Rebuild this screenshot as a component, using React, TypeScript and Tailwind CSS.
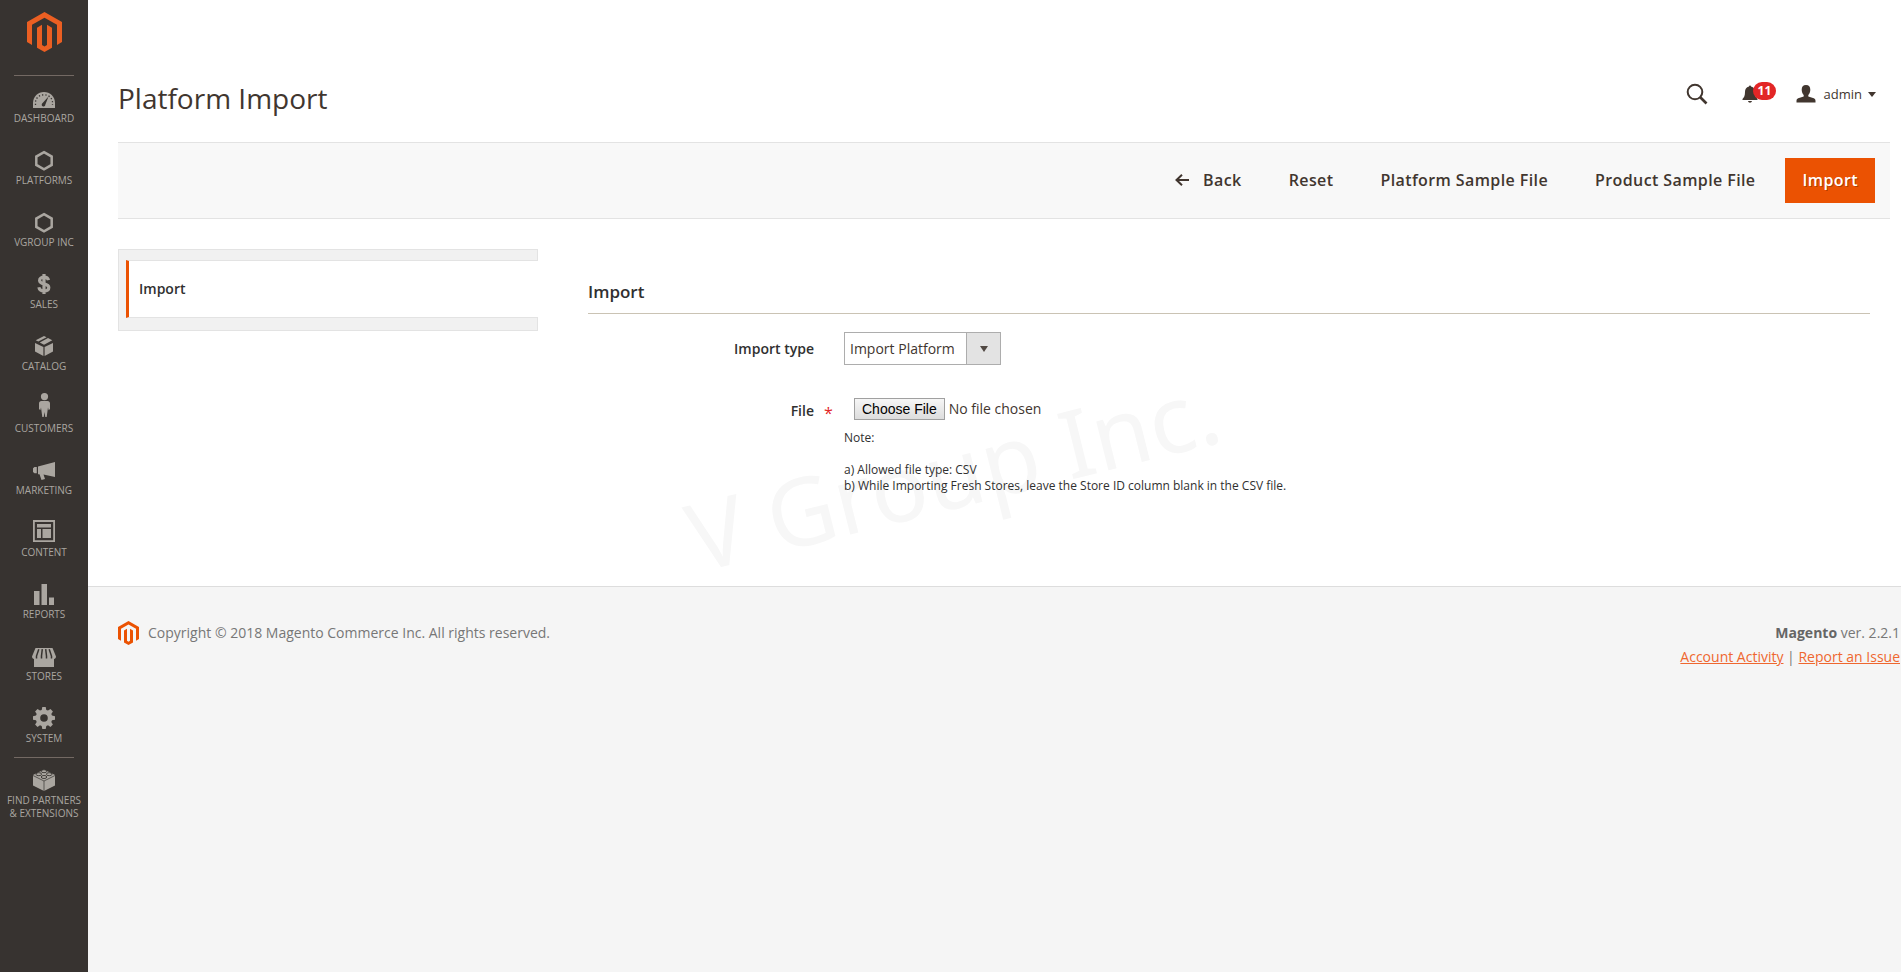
import { useState } from 'react';
import type { ReactNode } from 'react';

const menuItems: { label: string; icon: ReactNode }[] = [
  {
    label: 'Dashboard',
    icon: (
      <>
        <path fill="currentColor" d="M1 22v-5C1 10.500 6 6 12 6s11 4.500 11 11v5z" />
        <path
          stroke="#373330"
          strokeWidth="1.300"
          strokeDasharray="1.300 2"
          fill="none"
          d="M3.500 19v-2.500C3.500 12 7.500 8.800 12 8.800s8.500 3.200 8.500 7.700V19"
        />
        <path fill="#373330" d="M16.500 10.500l-3.200 8.200a1.800 1.800 0 1 1-2.700-1.600z" />
      </>
    ),
  },
  {
    label: 'Platforms',
    icon: <path fill="none" stroke="currentColor" strokeWidth="2.500" d="M12 4.200l7.700 4.400v8.300L12 21.300l-7.700-4.400V8.600z" />,
  },
  {
    label: 'VGroup Inc',
    icon: <path fill="none" stroke="currentColor" strokeWidth="2.500" d="M12 4.200l7.700 4.400v8.300L12 21.300l-7.700-4.400V8.600z" />,
  },
  {
    label: 'Sales',
    icon: (
      <path
        fill="none"
        stroke="currentColor"
        strokeWidth="3.200"
        d="M16.500 8.200C16 6 14.200 5.200 12 5.200c-2.600 0-4.400 1.100-4.400 3.200 0 4.600 9.200 2.300 9.200 7 0 2.300-2 3.500-4.800 3.500-2.700 0-4.700-1.200-5.100-3.700M12 2v20"
      />
    ),
  },
  {
    label: 'Catalog',
    icon: (
      <path
        fill="currentColor"
        d="M3 9l8.400 4v9L3 17.600zM21 9l-8.400 4v9l8.400-4.400zM12 2l2.600 1.300-8.300 4.300-2.600-1.300zM16 4l4.300 2.300L12 10.700 7.800 8.400z"
      />
    ),
  },
  {
    label: 'Customers',
    icon: (
      <path
        fill="currentColor"
        d="M12.500-3a3.600 3.600 0 1 1 0 7.200 3.600 3.600 0 0 1 0-7.200zM9.500 5h6c1.700 0 2.500 1 2.500 2.600V13l-1.300 1.300-.7-2.800L14.700 21h-1.400l-.8-5-.8 5h-1.400L9 11.500l-.7 2.800L7 13V7.600C7 6 7.800 5 9.500 5z"
      />
    ),
  },
  {
    label: 'Marketing',
    icon: <path fill="currentColor" d="M23 4v15l-11.500-2.500 1.500 4.500-3.500 1-2-5.800H6V8.500zM4.800 9v6.300H2.500L1 14v-3.800L2.500 9z" />,
  },
  {
    label: 'Content',
    icon: (
      <>
        <path fill="none" stroke="currentColor" strokeWidth="1.800" d="M1.900 1h20.200v20.100H1.900z" />
        <path fill="currentColor" d="M5 4h14v3.600H5zM5 9h4v9H5zM10.500 9H19v9h-8.500z" />
      </>
    ),
  },
  { label: 'Reports', icon: <path fill="currentColor" d="M2 9h5.500v14H2zM9.500 2H15v21H9.500zM17 15.500h5V23h-5z" /> },
  {
    label: 'Stores',
    icon: (
      <>
        <path fill="currentColor" d="M3.500 4h17L24 12.500c0 1.600-1 2.500-2 2.500v8H2v-8c-1 0-2-.900-2-2.500z" />
        <path
          stroke="#373330"
          strokeWidth="1.500"
          fill="none"
          d="M6.800 5.200L4.500 12v2.500M10.300 5.200L9.500 12v2.500M13.700 5.200l.8 6.800v2.500M17.200 5.200l2.300 6.800v2.500"
        />
      </>
    ),
  },
  {
    label: 'System',
    icon: (
      <path
        fill="currentColor"
        fillRule="evenodd"
        d="M10.300 1h3.400l.6 2.900 1.700.7 2.500-1.600 2.400 2.400-1.600 2.500.7 1.700 3 .7v3.400l-3 .6-.7 1.700 1.600 2.500-2.400 2.400-2.500-1.600-1.700.7-.6 3h-3.400l-.6-3-1.700-.7-2.500 1.600-2.400-2.400 1.600-2.500-.7-1.700-3-.6v-3.400l3-.7.7-1.700-1.600-2.500L5.500 3 8 4.600l1.700-.7zM12 8.200a3.800 3.800 0 1 0 0 7.600 3.800 3.800 0 0 0 0-7.600z"
      />
    ),
  },
];

const partnersIcon = (
  <>
    <path fill="currentColor" d="M1 7L12 1.500 23 7v10.500L12 23 1 17.500z" />
    <path fill="none" stroke="#373330" strokeWidth=".7" d="M1 7.500L12 13l11-5.500M12 13v10" />
    <g fill="currentColor" stroke="#373330" strokeWidth=".9">
      <ellipse cx="12" cy="3.200" rx="2.800" ry="1.500" />
      <ellipse cx="6.800" cy="6.200" rx="2.800" ry="1.500" />
      <ellipse cx="17.200" cy="6.200" rx="2.800" ry="1.500" />
      <ellipse cx="12" cy="9" rx="2.800" ry="1.500" />
    </g>
  </>
);

const MagentoLogo = ({ className }: { className: string }) => (
  <svg viewBox="0 0 35 40" className={className} fill="currentColor" aria-hidden="true">
    <path d="M17.500 0L35 10v20l-5 2.900V12.800L17.500 5.800 5 12.800v20.100L0 30V10z" />
    <path d="M10 15.700l5-2.900V33l2.500 1.500L20 33V12.800l5 2.900v20L17.500 40 10 35.700z" />
  </svg>
);

const MenuLink = ({ label, icon }: { label: string; icon: ReactNode }) => (
  <a href="#" className="flex h-[62px] flex-col items-center px-1 pt-[10px] text-center hover:text-white">
    <svg viewBox="0 0 24 24" className="h-6 w-6 shrink-0 overflow-visible" aria-hidden="true">
      {icon}
    </svg>
    <span className="mt-0.5 text-[10px] leading-[13px] uppercase">{label}</span>
  </a>
);

const Sidebar = () => (
  <nav className="w-[88px] shrink-0 bg-[#373330] text-[#aaa6a0]">
    <a href="#" className="flex h-[75px] justify-center pt-3 text-[#eb5f22]" aria-label="Magento Admin">
      <MagentoLogo className="h-10 w-[35px]" />
    </a>
    <hr className="mx-[14px] border-[#736963]" />
    {menuItems.map((item) => (
      <MenuLink key={item.label} label={item.label} icon={item.icon} />
    ))}
    <hr className="mx-[14px] -mt-px border-[#736963]" />
    <MenuLink label="Find Partners & Extensions" icon={partnersIcon} />
  </nav>
);

const Header = () => (
  <header className="flex items-start justify-between pt-[78px] pr-[25px] pb-6 pl-[30px]">
    <h1 className="text-[28px] leading-10 text-[#41362f]">Platform Import</h1>
    <div className="flex h-8 items-center text-[#41362f]">
      <button type="button" aria-label="Search" className="mr-[34px]">
        <svg viewBox="0 0 22 22" className="h-[22px] w-[22px]" fill="none" stroke="currentColor">
          <circle cx="9" cy="9" r="7.300" strokeWidth="2" />
          <path strokeWidth="2.600" d="M14 14l6.500 6.500" />
        </svg>
      </button>
      <button type="button" aria-label="Notifications" className="relative mr-[38px]">
        <svg viewBox="0 0 16 18" className="h-[18px] w-4" fill="currentColor">
          <path d="M7 1.500a1 1 0 0 1 2 0c2.800.6 4 2.800 4 5.500 0 4 1 5.500 2.500 7v1H.5v-1C2 12.500 3 11 3 7c0-2.700 1.200-4.900 4-5.500zM6 16h4c-.3 1.300-1 1.700-2 1.700S6.300 17.300 6 16z" />
        </svg>
        <span className="absolute -top-[3px] left-[11px] rounded-full bg-[#e22626] px-[5px] text-xs leading-[18px] font-bold text-white">
          11
        </span>
      </button>
      <button type="button" className="flex items-center text-[13px]">
        <svg viewBox="0 0 20 18" className="mr-2 h-[18px] w-5" fill="currentColor" aria-hidden="true">
          <path d="M10 0c3 0 4.300 2 4.300 4.800 0 2.300-.8 4-2 5.200v1.500l5.500 1.700c1.200.5 1.700 1.400 1.700 2.800v1.500H.5V16c0-1.400.5-2.300 1.700-2.800l5.500-1.700V10c-1.200-1.200-2-2.900-2-5.200C5.700 2 7 0 10 0z" />
        </svg>
        admin
        <svg viewBox="0 0 8 5" className="ml-1.5 h-[5px] w-2" fill="currentColor" aria-hidden="true">
          <path d="M0 0h8L4 5z" />
        </svg>
      </button>
    </div>
  </header>
);

const ActionButton = ({ children }: { children: ReactNode }) => (
  <button type="button" className="flex h-[45px] items-center px-4 pb-0.5">
    {children}
  </button>
);

const Toolbar = () => (
  <div className="mr-[11px] ml-[30px] flex h-[77px] items-center justify-end border-y border-[#e3e3e3] bg-[#f8f8f8] pr-[15px] text-base font-semibold tracking-wide text-[#41362f]">
    <div className="mr-[14px] flex gap-[15px]">
      <ActionButton>
        <svg viewBox="0 0 14 12" className="mr-[14px] h-3 w-[14px]" fill="none" stroke="currentColor" aria-hidden="true">
          <path strokeWidth="2" d="M14 6H1.500M7 .8L1.500 6 7 11.200" />
        </svg>
        Back
      </ActionButton>
      <ActionButton>Reset</ActionButton>
      <ActionButton>Platform Sample File</ActionButton>
      <ActionButton>Product Sample File</ActionButton>
    </div>
    <button
      type="submit"
      form="import-form"
      className="h-[45px] bg-[#eb5202] px-[17px] pb-0.5 text-white [text-shadow:1px_1px_0_rgba(0,0,0,0.25)]"
    >
      Import
    </button>
  </div>
);

const ImportForm = () => {
  const [importType, setImportType] = useState('platform');

  return (
    <form id="import-form" className="relative mr-5 flex-1 pt-[31px]" onSubmit={(e) => e.preventDefault()}>
      <h2 className="border-b border-[#cac3b4] pb-[9px] text-[17px] leading-6 font-semibold">Import</h2>
      <div className="mt-[18px] grid grid-cols-[226px_1fr] gap-x-[30px]">
        <label htmlFor="import-type" className="text-right leading-[33px] font-semibold">
          Import type
        </label>
        <div className="relative h-[33px] w-[157px]">
          <select
            id="import-type"
            value={importType}
            onChange={(e) => setImportType(e.target.value)}
            className="h-full w-full appearance-none border border-[#adadad] bg-white pl-[5px] text-[#41362f]"
          >
            <option value="platform">Import Platform</option>
            <option value="product">Import Product</option>
          </select>
          <span className="pointer-events-none absolute inset-y-0 right-0 flex w-[35px] items-center justify-center border border-[#adadad] bg-[#e3e3e3]">
            <svg viewBox="0 0 8 6" className="h-1.5 w-2" fill="#514943" aria-hidden="true">
              <path d="M0 0h8L4 6z" />
            </svg>
          </span>
        </div>
      </div>
      <div className="mt-[33px] grid grid-cols-[226px_1fr] gap-x-[30px]">
        <label htmlFor="import-file" className="relative text-right leading-[26px] font-semibold">
          File
          <span className="absolute top-[3px] left-full ml-[10px] text-base leading-6 font-normal text-[#e22626]">*</span>
        </label>
        <div>
          <input
            id="import-file"
            type="file"
            className="ml-[10px] block h-[22px] w-[300px] leading-[22px] text-[#41362f] file:mr-1 file:h-[22px] file:border file:border-solid file:border-[#a0a0a0] file:bg-linear-to-b file:from-[#f6f6f6] file:to-[#dddddd] file:px-[7px] file:font-['Liberation_Sans',sans-serif] file:text-sm file:leading-5 file:font-normal file:text-black"
          />
          <div className="mt-[10px] text-xs leading-4 text-[#303030]">
            <p className="mb-4">Note:</p>
            <p>a) Allowed file type: CSV</p>
            <p>b) While Importing Fresh Stores, leave the Store ID column blank in the CSV file.</p>
          </div>
        </div>
      </div>
      {/* Watermark behind the fields */}
      <div className="pointer-events-none absolute top-[163px] left-[93px] -z-10 -rotate-[14deg] font-['Noto_Sans',sans-serif] text-[94px] leading-[120px] whitespace-nowrap text-[#f7f7f7]">
        V Group Inc.
      </div>
    </form>
  );
};

const Footer = () => (
  <footer className="flex flex-1 items-start justify-between border-t border-[#ddd] bg-[#f5f5f5] pt-[34px] pr-px pl-[30px] leading-6 text-[#777]">
    <p className="flex items-center">
      <MagentoLogo className="mr-[9px] h-6 w-[21px] text-[#eb5202]" />
      Copyright © 2018 Magento Commerce Inc. All rights reserved.
    </p>
    <div className="text-right">
      <p>
        <strong className="font-bold text-[#666]">Magento</strong> ver. 2.2.1
      </p>
      <p>
        <a href="#" className="text-[#ef672f] underline">
          Account Activity
        </a>{' '}
        |{' '}
        <a href="#" className="text-[#ef672f] underline">
          Report an Issue
        </a>
      </p>
    </div>
  </footer>
);

const App = () => {
  return (
    <div className="flex min-h-screen bg-white font-['Open_Sans',sans-serif] text-sm text-[#303030]">
      <Sidebar />
      <div className="flex min-w-0 flex-1 flex-col">
        <Header />
        <Toolbar />
        <main className="isolate mr-[11px] ml-[30px] flex items-start gap-[50px] pt-[30px] pb-[92px]">
          <div className="w-[420px] border border-[#e3e3e3] bg-[#f1f1f1] pt-[10px] pb-3 pl-[7px]">
            <a
              href="#"
              className="-mr-px flex h-[58px] items-center border-y border-l-3 border-y-[#e3e3e3] border-l-[#eb5202] bg-white pl-[10px] font-semibold"
            >
              Import
            </a>
          </div>
          <ImportForm />
        </main>
        <Footer />
      </div>
    </div>
  );
};

export default App;
